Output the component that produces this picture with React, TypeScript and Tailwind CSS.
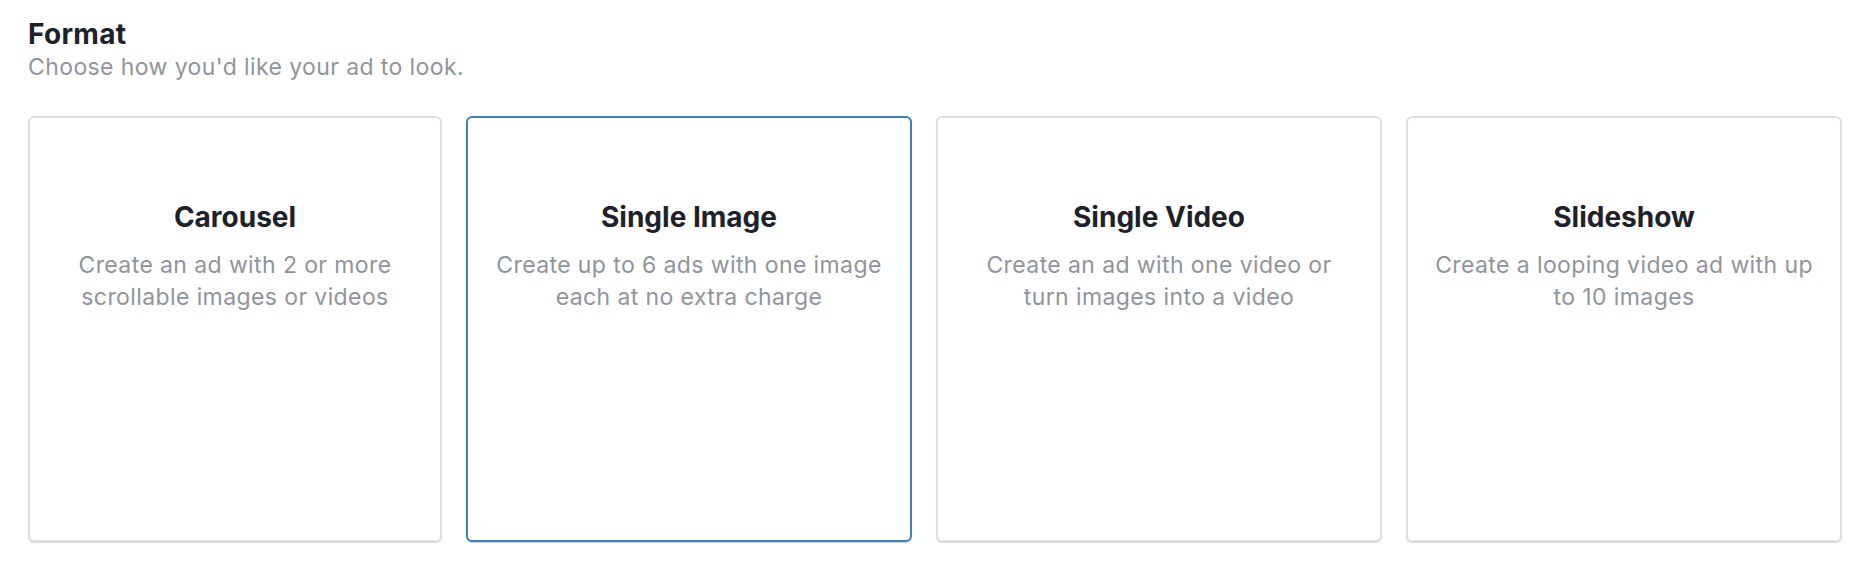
const formats = [
  {
    title: "Carousel",
    text: ["Create an ad with 2 or more", "scrollable images or videos"],
    width: "w-[414px]",
  },
  {
    title: "Single Image",
    text: ["Create up to 6 ads with one image", "each at no extra charge"],
    width: "w-[446px]",
    selected: true,
  },
  {
    title: "Single Video",
    text: ["Create an ad with one video or", "turn images into a video"],
    width: "w-[446px]",
  },
  {
    title: "Slideshow",
    text: ["Create a looping video ad with up", "to 10 images"],
    width: "w-[436px]",
  },
];

export default function App() {
  return (
    <div className="min-h-[566px] w-[1868px] bg-white pl-[28px] pt-[16px] font-['Inter',sans-serif]">
      {/* Header */}
      <h2 className="text-[28px] font-bold leading-[36px] tracking-[0.3px] text-[#1d2129]">
        Format
      </h2>
      <p className="text-[23px] leading-[30px] tracking-[0.4px] text-[#90949c]">
        Choose how you'd like your ad to look.
      </p>

      {/* Format cards */}
      <div className="mt-[34px] flex gap-6">
        {formats.map((f) => (
          <button
            key={f.title}
            className={
              "flex h-[426px] flex-col items-center rounded-[6px] bg-white pt-[82px] " +
              f.width +
              (f.selected
                ? " border-2 border-[#3f7fc4] shadow-[0_1px_1px_rgba(0,0,0,0.2)]"
                : " border-2 border-[#dddfe2] shadow-[0_1px_1px_rgba(0,0,0,0.15)]")
            }
          >
            <span className="text-[28px] font-bold leading-[34px] text-[#1d2129]">
              {f.title}
            </span>
            <span className="mt-[15px] text-[23px] leading-[32px] tracking-[0.4px] text-[#90949c]">
              {f.text.map((line) => (
                <span key={line} className="block">
                  {line}
                </span>
              ))}
            </span>
          </button>
        ))}
      </div>
    </div>
  );
}
